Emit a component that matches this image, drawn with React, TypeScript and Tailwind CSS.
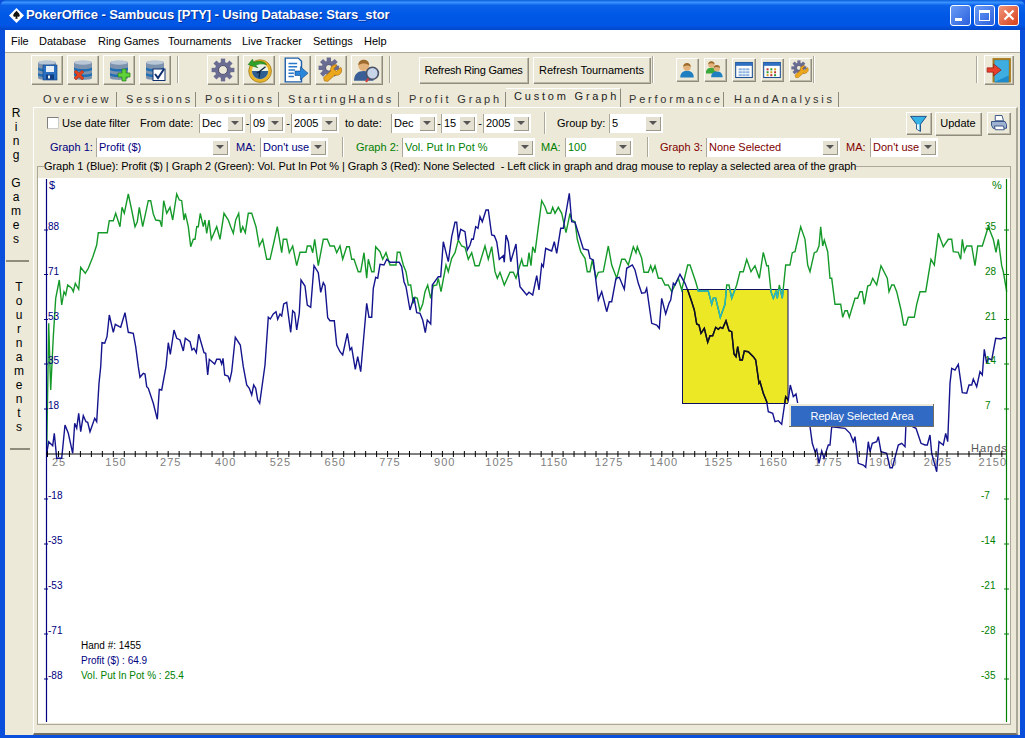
import React from "react";

const g3 = "140,850 146,460 152,660 160,500 167,385 178,330 185,405 192,365 197,375 203,345 215,355 220,365 226,340 236,358 242,292 256,310 265,295 278,262 290,225 295,188 322,188 328,152 340,152 347,130 360,170 366,112 373,130 385,72 395,120 405,170 412,155 418,112 428,170 445,92 452,92 460,132 467,150 480,152 485,170 491,92 500,130 510,112 518,150 530,72 538,90 545,92 552,150 556,130 565,170 572,230 580,208 585,208 590,170 595,170 601,130 610,170 615,150 620,190 627,150 634,208 650,170 660,208 672,130 685,150 692,170 700,190 707,150 716,130 722,188 728,170 736,188 745,130 755,130 768,170 778,228 788,208 800,268 810,268 820,225 832,170 845,248 850,208 860,208 868,248 878,228 890,287 900,247 918,247 922,228 932,228 938,248 944,208 955,287 970,208 982,208 990,228 1003,228 1010,248";
const g4 = "0,228 8,268 20,230 28,230 35,268 42,268 55,305 62,305 72,248 80,325 85,268 95,305 102,305 107,230 120,245 128,268 138,248 150,285 168,285 172,247 180,247 190,285 198,305 205,345 212,345 220,400 225,382 232,385 240,422 248,402 255,365 263,345 272,385 280,347 290,345 295,325 303,365 318,285 325,305 335,265 345,248 355,210 365,228 375,232 385,268 395,248 405,287 417,287 435,228 445,268 455,230 465,305 472,325 480,307 493,345 510,307 520,307 528,325 545,268 550,287 562,287 567,248 573,287 578,230 585,248 605,92 615,110 622,130 632,130 638,112 645,130 655,112 665,130 678,188 690,130 695,150 705,155 712,208 722,245 735,265 742,305 750,305 757,270 768,325 775,307 790,305 805,228 815,285 830,325 845,268 855,268 865,285 880,230 888,248 892,230 905,265 912,307 925,307 932,287 938,305 945,287 955,325 965,325 975,345 985,345 995,365";
const g5 = "0,345 10,325 20,360 38,285 45,285 62,335 70,363 100,363 110,403 115,385 122,385 136,442 150,403 155,345 162,345 170,385 185,345 195,305 205,305 215,268 228,305 240,287 253,325 265,247 275,287 280,287 288,365 295,385 303,365 307,385 313,345 322,385 332,285 345,285 352,248 360,245 377,170 390,208 398,285 405,305 418,248 425,245 432,228 437,170 443,228 448,210 458,245 465,325 470,325 480,403 497,403 503,442 510,422 517,422 523,442 540,385 548,385 555,365 562,365 568,403 578,348 586,345 593,325 605,345 618,287 637,325 642,365 650,345 657,345 665,365 678,420 686,465 693,465 700,442 718,442 725,403 735,365 752,365 768,268 778,285 790,190 805,230 820,208 830,208 835,245 850,247 857,268 862,208 868,245 875,228 890,228 900,287 908,228 922,228 940,170 955,208 963,247 970,208 980,287 985,305 995,365";
const b3 = "140,850 146,815 158,827 163,790 170,865 185,865 195,765 205,790 218,850 224,760 230,775 236,730 242,785 250,737 258,755 263,757 270,785 284,745 290,755 297,640 302,590 306,518 314,520 321,500 328,435 340,487 346,463 358,470 362,472 375,428 385,487 400,490 407,530 415,590 420,622 430,610 435,612 440,650 445,655 460,700 472,748 478,658 485,660 498,590 505,518 511,553 522,480 530,505 540,510 550,543 556,505 570,515 576,540 582,535 589,548 596,493 612,548 617,550 623,615 628,568 644,582 650,568 660,568 665,582 669,565 674,615 684,618 689,632 695,605 706,502 721,525 730,590 740,645 748,655 755,675 761,645 767,655 773,690 779,700 795,585 805,442 811,447 820,432 828,425 833,448 840,432 845,438 851,402 860,397 872,487 878,422 884,428 890,480 898,430 903,330 915,348 922,405 932,412 942,287 955,308 962,367 970,338 975,347 983,443 990,452 1003,452 1010,525";
const b4 = "0,545 8,555 22,490 30,540 35,533 46,598 53,560 62,605 80,400 87,442 95,442 100,355 107,322 113,325 120,283 132,285 140,268 150,277 178,277 185,290 192,335 198,350 210,420 222,382 230,428 240,430 248,450 256,488 262,450 272,462 277,345 295,320 302,320 310,215 325,275 335,200 345,157 350,157 355,210 362,178 375,185 382,240 390,225 395,207 400,208 407,170 414,175 420,140 427,155 438,120 445,120 455,195 463,197 470,215 478,268 490,257 493,277 498,195 505,215 512,275 528,222 535,310 540,350 550,362 560,375 567,367 578,375 590,317 597,360 605,283 610,290 617,235 628,240 635,243 643,215 650,250 662,175 670,175 688,70 695,155 705,157 720,205 730,237 745,240 750,265 760,270 775,390 785,365 800,425 808,395 815,395 828,325 838,322 853,358 860,295 877,285 885,300 895,340 905,370 915,368 920,355 935,460 950,465 958,475 965,385 977,432 987,400 992,390 1000,340";
const b5 = "0,345 15,313 30,340 40,365 50,395 58,420 65,462 72,465 78,490 88,475 98,517 105,497 113,497 122,472 130,478 136,472 143,475 153,452 162,482 170,485 177,552 183,560 188,530 195,570 202,570 208,543 220,545 235,560 242,570 252,640 255,635 265,670 275,695 280,725 293,730 300,755 310,752 320,763 332,680 340,690 346,645 355,680 363,672 368,700 405,770 412,820 420,845 425,838 432,880 440,843 447,865 460,825 465,825 470,770 510,775 525,790 535,815 540,800 550,880 565,885 572,892 580,815 585,845 592,820 605,815 610,800 618,845 635,850 645,893 652,893 670,825 680,820 690,830 693,760 723,775 738,820 750,825 757,825 765,795 770,850 785,905 792,815 805,825 812,790 818,815 825,640 830,595 840,600 850,583 862,668 875,670 882,645 890,645 895,627 905,650 915,605 922,615 928,538 935,580 940,565 950,570 962,505 978,507 985,503 995,503";

function conv(s: string, ox: number) {
  return s.split(" ").map((p) => {
    const [x, y] = p.split(",").map(Number);
    return `${(ox + x / 3).toFixed(1)},${(170 + y / 3).toFixed(1)}`;
  });
}
const greenPts = [...conv(g3, 0), ...conv(g4, 340), ...conv(g5, 675)].join(" ");
const bluePts = [...conv(b3, 0), ...conv(b4, 340), ...conv(b5, 675)].join(" ");

const RAISED = "bg-[#ece9d8] shadow-[inset_1px_1px_0_#fff,inset_-1px_-1px_0_#bdb9a8,1px_1px_0_#8f8c7d]";

function Sep({ className = "" }: { className?: string }) {
  return <div className={"w-[2px] border-l border-[#aca899] border-r-[#fff] border-r " + className} />;
}

function Db({ children }: { children?: React.ReactNode }) {
  return (
    <svg viewBox="0 0 24 24" className="w-[24px] h-[24px]">
      <path d="M3 4.5C3 2.5 21 2.5 21 4.5V20C21 22.5 3 22.5 3 20Z" fill="#7d93ad" />
      <ellipse cx="12" cy="4.5" rx="9" ry="2.2" fill="#b9c6d6" />
      <path d="M3 9.5C7 11.5 17 11.5 21 9.5V12C17 14 7 14 3 12Z" fill="#1f6fb4" />
      <path d="M3 15C7 17 17 17 21 15V17.5C17 19.5 7 19.5 3 17.5Z" fill="#1f6fb4" />
      {children}
    </svg>
  );
}

function Gear({ fill = "#6a6c92", cx = 12, cy = 12, r = 7.5 }: { fill?: string; cx?: number; cy?: number; r?: number }) {
  const teeth = [0, 45, 90, 135, 180, 225, 270, 315];
  return (
    <g>
      {teeth.map((a) => (
        <rect key={a} x={cx - 2} y={cy - r - 3} width={4} height={5} fill={fill} transform={`rotate(${a} ${cx} ${cy})`} />
      ))}
      <circle cx={cx} cy={cy} r={r} fill={fill} />
      <circle cx={cx} cy={cy} r={r - 3.4} fill="#ece9d8" stroke="#3f4168" strokeWidth="0.8" />
    </g>
  );
}

function Wrench() {
  return <path d="M21 9.5c1.5 2.2 1 5-1 6.5-1.3 1-3 1.2-4.4.6L9 22.5 5.8 22l-.6-3 6.6-6c-.5-1.6-.1-3.4 1.2-4.6 1.3-1.2 3.1-1.6 4.6-1L14.5 11l2.4 2.2Z" fill="#eca81d" stroke="#a8680a" strokeWidth="0.6" />;
}

function User({ cx = 12, body = "#1f7fc0", head = "#e3b27a", hair = "#9b6a2c" }: { cx?: number; body?: string; head?: string; hair?: string }) {
  return (
    <g>
      <path d={`M${cx - 9} 22c0-6 3.5-9 9-9s9 3 9 9Z`} fill={body} />
      <circle cx={cx} cy={8} r={5} fill={head} />
      <path d={`M${cx - 5} 7.5c0-6.5 10-6.5 10 0-3-2-7-2-10 0Z`} fill={hair} />
    </g>
  );
}

function IconSave() {
  return (
    <Db>
      <rect x="8" y="7" width="14" height="15" fill="#2a6fc0" stroke="#0f3d80" strokeWidth="0.6" />
      <rect x="11" y="8" width="8" height="6" fill="#e8eef6" />
      <rect x="11" y="16.5" width="8" height="5" fill="#0f3d80" />
      <rect x="13" y="17.5" width="2" height="3" fill="#e8eef6" />
    </Db>
  );
}
function IconDel() {
  return (
    <Db>
      <path d="M3 14l2-2 3 3 3-3 2 2-3 3 3 3-2 2-3-3-3 3-2-2 3-3Z" fill="#e0431f" stroke="#9a2a10" strokeWidth="0.5" />
    </Db>
  );
}
function IconAdd() {
  return (
    <Db>
      <path d="M15 11h4v4h4v4h-4v4h-4v-4h-4v-4h4Z" fill="#5fd23a" stroke="#1f7a18" strokeWidth="0.7" />
    </Db>
  );
}
function IconCheck() {
  return (
    <Db>
      <rect x="10" y="11" width="12" height="11.5" fill="#fff" stroke="#0f2f70" strokeWidth="1" />
      <path d="M12 16l3 4 6-9" fill="none" stroke="#0f2f70" strokeWidth="2" />
    </Db>
  );
}
function IconGear() {
  return (
    <svg viewBox="0 0 24 24" className="w-[26px] h-[26px]">
      <Gear />
    </svg>
  );
}
function IconClock() {
  return (
    <svg viewBox="0 0 24 24" className="w-[26px] h-[26px]">
      <circle cx="13" cy="13" r="10.5" fill="#e9b52c" stroke="#8c6a10" strokeWidth="0.6" />
      <circle cx="13" cy="13" r="7.5" fill="#eaf3e4" />
      <path d="M5.5 13A7.5 7.5 0 0 0 20.5 13Z" fill="#2f5f90" />
      <path d="M13 13l5-4M13 13l-1 6M13 13l-3 2" stroke="#10233f" strokeWidth="1.2" fill="none" />
      <path d="M2 7l4-5 1 3c5-2 10-1 12 2-4-1-8-1-10 1l2 2Z" fill="#2fa32a" stroke="#146812" strokeWidth="0.5" />
    </svg>
  );
}
function IconDoc() {
  return (
    <svg viewBox="0 0 24 24" className="w-[26px] h-[26px]">
      <path d="M3 1h12l3 3v19H3Z" fill="#fff" stroke="#1f5fa8" strokeWidth="1.3" />
      <path d="M6 6h8M6 9h8M6 12h6M6 15h5M6 18h5" stroke="#2a78c8" strokeWidth="1.5" />
      <path d="M12 13h5V9l7 6-7 6v-4h-5Z" fill="#2a86d8" stroke="#104a90" strokeWidth="0.6" />
    </svg>
  );
}
function IconGearWrench({ small = false }: { small?: boolean }) {
  return (
    <svg viewBox="0 0 24 24" className={small ? "w-[19px] h-[19px]" : "w-[26px] h-[26px]"}>
      <Gear cx={10} cy={10} r={6.5} />
      <Wrench />
    </svg>
  );
}
function IconUserSearch() {
  return (
    <svg viewBox="0 0 24 24" className="w-[26px] h-[26px]">
      <User cx={9} body="#3a5f96" />
      <path d="M15 18l-4 5" stroke="#d0403a" strokeWidth="2" />
      <circle cx="17" cy="15" r="5.5" fill="#c8d4e8" stroke="#4a5268" strokeWidth="1.5" />
    </svg>
  );
}
function IconUser() {
  return (
    <svg viewBox="0 0 24 24" className="w-[18px] h-[18px]">
      <User />
    </svg>
  );
}
function IconUsers() {
  return (
    <svg viewBox="0 0 24 24" className="w-[18px] h-[18px]">
      <g transform="translate(-3,-2) scale(.85)">
        <User cx={12} body="#3aa83a" />
      </g>
      <g transform="translate(6,3) scale(.85)">
        <User cx={10} />
      </g>
    </svg>
  );
}
function IconTable({ colored = false }: { colored?: boolean }) {
  const cells = [5, 9.5, 14];
  const rows = [10, 13.5, 17];
  const cols = ["#c03030", "#2f9a2f", "#d8a020"];
  return (
    <svg viewBox="0 0 24 24" className="w-[20px] h-[20px]">
      <rect x="2" y="3" width="20" height="18" fill="#fff" stroke="#1c4f94" strokeWidth="1.3" />
      <rect x="2" y="3" width="20" height="4" fill="#3070c0" />
      {rows.map((y, ri) =>
        cells.map((x, ci) => <rect key={`${x}${y}`} x={x + 0.5} y={y} width={colored ? 2.4 : 4} height={2.4} fill={colored ? cols[(ri + ci) % 3] : "#8fb2de"} />)
      )}
    </svg>
  );
}
function IconDoor() {
  return (
    <svg viewBox="0 0 24 24" className="w-[26px] h-[26px]">
      <rect x="6" y="1" width="17" height="22.5" fill="#a57c1f" />
      <rect x="8" y="3" width="13" height="20.5" fill="#1c8acb" />
      <path d="M8 3l13 0 0 14-13 6Z" fill="#3eaee0" />
      <path d="M1 10h6V6.5l7 5.5-7 5.5V14H1Z" fill="#e8402c" stroke="#90180f" strokeWidth="0.6" />
    </svg>
  );
}
function IconFunnel() {
  return (
    <svg viewBox="0 0 24 24" className="w-[19px] h-[19px]">
      <path d="M2 3h20L14.5 13v9l-5-3v-6Z" fill="#35b2e6" stroke="#0f3f7a" strokeWidth="1.1" />
      <path d="M10 13v6l3 1.5V13Z" fill="#e8f6fc" />
    </svg>
  );
}
function IconPrinter() {
  return (
    <svg viewBox="0 0 24 24" className="w-[18px] h-[18px]">
      <path d="M7 2h9l2 7H7Z" fill="#fff" stroke="#2c4a80" strokeWidth="1.2" />
      <path d="M2 10h18l2 4v5H4L2 15Z" fill="#9fb2d2" stroke="#2c4a80" strokeWidth="1.2" />
      <path d="M6 16h12l1 5H7Z" fill="#fff" stroke="#2c4a80" strokeWidth="1.2" />
    </svg>
  );
}

function TBtn({ children, className = "w-[31px] h-[29px]" }: { children: React.ReactNode; className?: string }) {
  return <div className={"flex items-center justify-center shrink-0 " + RAISED + " " + className}>{children}</div>;
}

function Combo({ value, w, color = "text-black" }: { value: string; w: string; color?: string }) {
  return (
    <div className={"flex items-center h-[19px] shrink-0 bg-white border-l border-[#aaa89a] " + w}>
      <span className={"flex-1 pl-[2px] truncate " + color}>{value}</span>
      <div className="w-[16px] h-[15px] mr-[2px] flex items-center justify-center bg-[#e4e1d2] shadow-[inset_1px_1px_0_#fff,inset_-1px_-1px_0_#9d9a8a]">
        <div className="w-0 h-0 border-x-[4px] border-x-transparent border-t-[4px] border-t-[#555]" />
      </div>
    </div>
  );
}

const tabs = [
  { t: "Overview", c: "w-[79px] pl-[5px]" },
  { t: "Sessions", c: "w-[79px] pl-[9px]" },
  { t: "Positions", c: "w-[83px] pl-[9px]" },
  { t: "StartingHands", c: "w-[120px] pl-[9px]" },
  { t: "Profit Graph", c: "w-[107px] pl-[10px]" },
];
const tabsAfter = [
  { t: "Performance", c: "w-[103px] pl-[8px]" },
  { t: "HandAnalysis", c: "w-[115px] pl-[10px]" },
];

function Tab({ t, c }: { t: string; c: string }) {
  return (
    <div className={"h-[15px] mt-[1px] border-r border-[#8d8b7e] text-[#333] tracking-[2.8px] leading-[15px] whitespace-nowrap " + c}>{t}</div>
  );
}

const ringLetters = ["R", "i", "n", "g", " ", "G", "a", "m", "e", "s"];
const tourLetters = ["T", "o", "u", "r", "n", "a", "m", "e", "n", "t", "s"];

function Chart() {
  const lefts: [string, number][] = [["88", 230], ["71", 274.5], ["53", 319.5], ["35", 364], ["18", 409], ["-18", 499], ["-35", 544], ["-53", 589], ["-71", 634], ["-88", 679]];
  const rights: [string, number][] = [["35", 230], ["28", 274.5], ["21", 319.5], ["14", 364], ["7", 409], ["-7", 499], ["-14", 544], ["-21", 589], ["-28", 634], ["-35", 679]];
  const xLabels = [150, 275, 400, 525, 650, 775, 900, 1025, 1150, 1275, 1400, 1525, 1650, 1775, 1900, 2025, 2150];
  const ticks: number[] = [];
  for (let x = 47.5; x < 1005; x += 10.97) ticks.push(x);
  return (
    <svg viewBox="38 178 972 545" className="w-[972px] h-[545px] block text-[10px]">
      <defs>
        <clipPath id="sel">
          <rect x="682" y="289" width="106" height="114" />
        </clipPath>
      </defs>
      <text x="59" y="466" fill="#808080" fontSize="11" letterSpacing="1" textAnchor="middle">25</text>
      {xLabels.map((v, i) => (
        <text key={v} x={116 + 54.8 * i} y="466" fill="#808080" fontSize="11" letterSpacing="1" textAnchor="middle">{v}</text>
      ))}
      <rect x="682.5" y="289.5" width="105.5" height="114" fill="#ece825" stroke="#10105c" />
      <polyline points={greenPts} fill="none" stroke="#159a2a" strokeWidth="1.4" />
      <polyline points={bluePts} fill="none" stroke="#14148e" strokeWidth="1.4" />
      <g clipPath="url(#sel)">
        <polyline points={greenPts} fill="none" stroke="#2ab5c8" strokeWidth="1.4" />
        <polyline points={bluePts} fill="none" stroke="#111" strokeWidth="1.4" />
      </g>
      <line x1="46.5" y1="179" x2="46.5" y2="722" stroke="#000080" strokeWidth="1.2" />
      <line x1="1006.5" y1="179" x2="1006.5" y2="722" stroke="#008000" strokeWidth="1.2" />
      <line x1="46" y1="454" x2="1006" y2="454" stroke="#000" strokeWidth="1" />
      {ticks.map((x) => (
        <line key={x} x1={x} y1="451" x2={x} y2="457" stroke="#000" />
      ))}
      <text x="49" y="189" fill="#000080" fontSize="11">$</text>
      <text x="992" y="189" fill="#008000" fontSize="11">%</text>
      {lefts.map(([s, y]) => (
        <g key={s}>
          <line x1="44" y1={y} x2="48" y2={y} stroke="#000080" />
          <text x="48" y={y} fill="#000080" fontSize="10">{s}</text>
        </g>
      ))}
      {rights.map(([s, y]) => (
        <g key={s}>
          <line x1="1004" y1={y} x2="1009" y2={y} stroke="#008000" />
          <text x={s.startsWith("-") ? 981 : 985} y={y} fill="#008000" fontSize="10">{s}</text>
        </g>
      ))}
      <text x="971" y="452" fill="#555" fontSize="11" letterSpacing="1">Hands</text>
      <text x="81" y="649" fill="#000" fontSize="10">Hand #: 1455</text>
      <text x="81" y="664" fill="#000080" fontSize="10">Profit ($) : 64.9</text>
      <text x="81" y="679" fill="#008000" fontSize="10">Vol. Put In Pot % : 25.4</text>
    </svg>
  );
}

export default function App() {
  return (
    <div className="w-[1025px] h-[738px] overflow-hidden flex flex-col text-[11px] leading-[14px] text-black [font-family:'Liberation_Sans',sans-serif] bg-[#0a4fdc]">
      {/* Title bar */}
      <div className="h-[30px] shrink-0 flex items-center rounded-t-[7px] pl-[9px] pr-[6px] bg-[linear-gradient(to_bottom,#0a5ed8_0%,#3a93ff_8%,#0a62ea_18%,#0058e6_50%,#0055e5_85%,#0347c8_100%)]">
        <svg viewBox="0 0 16 16" className="w-[15px] h-[15px] shrink-0">
          <path d="M8 0l8 8-8 8-8-8Z" fill="#fff" />
          <path d="M8 3c1.5 2 3.5 3 3.5 5 0 1.3-1.7 1.8-2.8 1l.6 2.5H6.7L7.3 9c-1.1.8-2.8.3-2.8-1 0-2 2-3 3.5-5Z" fill="#111" />
        </svg>
        <span className="ml-[2px] text-white font-bold text-[13px] tracking-[-0.1px] [text-shadow:1px_1px_0_#0a2f90] whitespace-nowrap">PokerOffice - Sambucus [PTY] - Using Database: Stars_stor</span>
        <div className="ml-auto flex gap-[3px]">
          <div className="w-[21px] h-[21px] rounded-[3px] border border-white bg-[linear-gradient(135deg,#6a9cf5,#2a5fdd)] flex items-end pl-[4px] pb-[4px]">
            <div className="w-[7px] h-[3px] bg-white" />
          </div>
          <div className="w-[21px] h-[21px] rounded-[3px] border border-white bg-[linear-gradient(135deg,#6a9cf5,#2a5fdd)] flex items-center justify-center">
            <div className="w-[11px] h-[11px] border border-white border-t-[3px]" />
          </div>
          <div className="w-[21px] h-[21px] rounded-[3px] border border-white bg-[linear-gradient(135deg,#f0957a,#d8401c)] flex items-center justify-center">
            <svg viewBox="0 0 12 12" className="w-[12px] h-[12px]">
              <path d="M1.5 1.5l9 9M10.5 1.5l-9 9" stroke="#fff" strokeWidth="2.2" />
            </svg>
          </div>
        </div>
      </div>

      {/* Window body */}
      <div className="h-[705px] shrink-0 mx-[5px] bg-[#ece9d8] flex flex-col">
        {/* Menu */}
        <div className="h-[22px] shrink-0 bg-white flex items-center pl-[6px] border-b border-[#aca899] box-content">
          <span className="w-[28px]">File</span>
          <span className="w-[59px]">Database</span>
          <span className="w-[70px]">Ring Games</span>
          <span className="w-[74px]">Tournaments</span>
          <span className="w-[71px]">Live Tracker</span>
          <span className="w-[51px]">Settings</span>
          <span>Help</span>
        </div>

        {/* Toolbar */}
        <div className="h-[33px] shrink-0 flex items-center pl-[26px] pr-[7px]">
          <div className="flex gap-[5px]">
            <TBtn><IconSave /></TBtn>
            <TBtn><IconDel /></TBtn>
            <TBtn><IconAdd /></TBtn>
            <TBtn><IconCheck /></TBtn>
          </div>
          <Sep className="h-[27px] ml-[7px]" />
          <div className="flex gap-[5px] ml-[28px]">
            <TBtn><IconGear /></TBtn>
            <TBtn><IconClock /></TBtn>
            <TBtn><IconDoc /></TBtn>
            <TBtn><IconGearWrench /></TBtn>
            <TBtn><IconUserSearch /></TBtn>
          </div>
          <Sep className="h-[27px] ml-[7px]" />
          <TBtn className="w-[109px] h-[26px] ml-[28px]"><span className="tracking-[-0.25px]">Refresh Ring Games</span></TBtn>
          <TBtn className="w-[117px] h-[26px] ml-[5px]"><span>Refresh Tournaments</span></TBtn>
          <Sep className="h-[27px] ml-[2px]" />
          <TBtn className="w-[22px] h-[23px] ml-[22px]"><IconUser /></TBtn>
          <TBtn className="w-[22px] h-[23px] ml-[6px]"><IconUsers /></TBtn>
          <TBtn className="w-[23px] h-[23px] ml-[6px]"><IconTable /></TBtn>
          <TBtn className="w-[22px] h-[23px] ml-[6px]"><IconTable colored /></TBtn>
          <TBtn className="w-[22px] h-[23px] ml-[6px]"><IconGearWrench small /></TBtn>
          <Sep className="h-[27px] ml-[2px]" />
          <Sep className="h-[27px] ml-auto" />
          <TBtn className="w-[29px] h-[29px] ml-[6px]"><IconDoor /></TBtn>
        </div>

        {/* Main */}
        <div className="flex-1 flex min-h-0">
          {/* Sidebar */}
          <div className="w-[28px] shrink-0 pt-[20px] flex flex-col items-center text-[12px]">
            {ringLetters.map((l, i) => (
              <div key={i} className="h-[14px] leading-[14px] w-full text-center pr-[6px]">{l === " " ? "\u00a0" : l}</div>
            ))}
            <div className="w-[23px] h-[2px] mt-[14px] bg-[#8f8c7d] mr-[3px]" />
            <div className="mt-[18px] w-full">
              {tourLetters.map((l, i) => (
                <div key={i} className="h-[14px] leading-[14px] text-center">{l}</div>
              ))}
            </div>
            <div className="w-[20px] h-[2px] mt-[14px] bg-[#8f8c7d] ml-[2px]" />
          </div>

          {/* Tabs + panel */}
          <div className="flex-1 flex flex-col min-w-0">
            {/* Tab strip */}
            <div className="h-[21px] shrink-0 flex items-end pl-[5px] pb-0">
              {tabs.map((x) => (
                <Tab key={x.t} t={x.t} c={x.c} />
              ))}
              <div className="w-[115px] h-[19px] bg-[#ece9d8] border-r border-[#8d8b7e] border-t border-t-white pl-[8px] tracking-[2.8px] leading-[15px] text-[#222] whitespace-nowrap">Custom Graph</div>
              {tabsAfter.map((x) => (
                <Tab key={x.t} t={x.t} c={x.c} />
              ))}
            </div>

            {/* Panel */}
            <div className="flex-1 min-h-0 border-l border-t border-white border-r-[2px] border-r-[#aca899] border-b-[2px] border-b-[#716f64] flex flex-col mr-[2px]">
              {/* Row 1 */}
              <div className="h-[24px] mt-[3px] shrink-0 flex items-center">
                <div className="w-[12px] h-[12px] ml-[13px] bg-white border border-[#808080] border-r-[#ccc] border-b-[#ccc] shrink-0" />
                <span className="ml-[3px] w-[71px]">Use date filter</span>
                <span className="ml-[7px] w-[56px]">From date:</span>
                <div className="ml-[3px]"><Combo value="Dec" w="w-[46px]" /></div>
                <span className="w-[5px] text-center">-</span>
                <Combo value="09" w="w-[35px]" />
                <span className="w-[6px] text-center">-</span>
                <Combo value="2005" w="w-[48px]" />
                <span className="ml-[6px] w-[46px]">to date:</span>
                <Combo value="Dec" w="w-[46px]" />
                <span className="w-[4px] text-center">-</span>
                <Combo value="15" w="w-[36px]" />
                <span className="w-[6px] text-center">-</span>
                <Combo value="2005" w="w-[48px]" />
                <Sep className="h-[22px] ml-[13px]" />
                <span className="ml-[11px] w-[52px]">Group by:</span>
                <Combo value="5" w="w-[54px]" />
                <TBtn className="w-[25px] h-[22px] ml-auto"><IconFunnel /></TBtn>
                <TBtn className="w-[46px] h-[23px] ml-[4px]"><span>Update</span></TBtn>
                <TBtn className="w-[23px] h-[22px] ml-[6px] mr-[6px]"><IconPrinter /></TBtn>
              </div>
              {/* Row 2 */}
              <div className="h-[20px] mt-[2px] shrink-0 flex items-center">
                <span className="ml-[16px] w-[46px] text-[#000080]">Graph 1:</span>
                <Combo value="Profit ($)" w="w-[134px]" color="text-[#000080]" />
                <span className="ml-[6px] w-[24px] text-[#000080]">MA:</span>
                <Combo value="Don't use" w="w-[68px]" color="text-[#000080]" />
                <Sep className="h-[20px] ml-[14px]" />
                <span className="ml-[12px] w-[46px] text-[#008000]">Graph 2:</span>
                <Combo value="Vol. Put In Pot %" w="w-[133px]" color="text-[#008000]" />
                <span className="ml-[6px] w-[24px] text-[#008000]">MA:</span>
                <Combo value="100" w="w-[68px]" color="text-[#008000]" />
                <Sep className="h-[20px] ml-[14px]" />
                <span className="ml-[11px] w-[46px] text-[#800000]">Graph 3:</span>
                <Combo value="None Selected" w="w-[134px]" color="text-[#800000]" />
                <span className="ml-[6px] w-[24px] text-[#800000]">MA:</span>
                <Combo value="Don't use" w="w-[68px]" color="text-[#800000]" />
              </div>
              {/* Group box */}
              <fieldset className="mt-[2px] ml-[3px] w-[974px] h-[566px] shrink-0 border border-[#aca899]">
                <legend className="ml-[6px] h-[14px] leading-[14px] whitespace-nowrap tracking-[-0.06px]">Graph 1 (Blue): Profit ($) | Graph 2 (Green): Vol. Put In Pot % | Graph 3 (Red): None Selected&nbsp; - Left click in graph and drag mouse to replay a selected area of the graph</legend>
                <div className="relative mt-[5px] bg-white w-[972px] h-[545px]">
                  <Chart />
                  <div className="absolute left-[750px] top-[225px] w-[146px] h-[24px] bg-[#ece9d8] p-[3px] pr-[1px] shadow-[inset_1px_1px_0_#fff,inset_-1px_-1px_0_#716f64]">
                    <div className="h-[20px] bg-[#316ac5] text-white flex items-center justify-center tracking-[-0.15px]">Replay Selected Area</div>
                  </div>
                </div>
              </fieldset>
            </div>
          </div>
        </div>
      </div>
    </div>
  );
}
